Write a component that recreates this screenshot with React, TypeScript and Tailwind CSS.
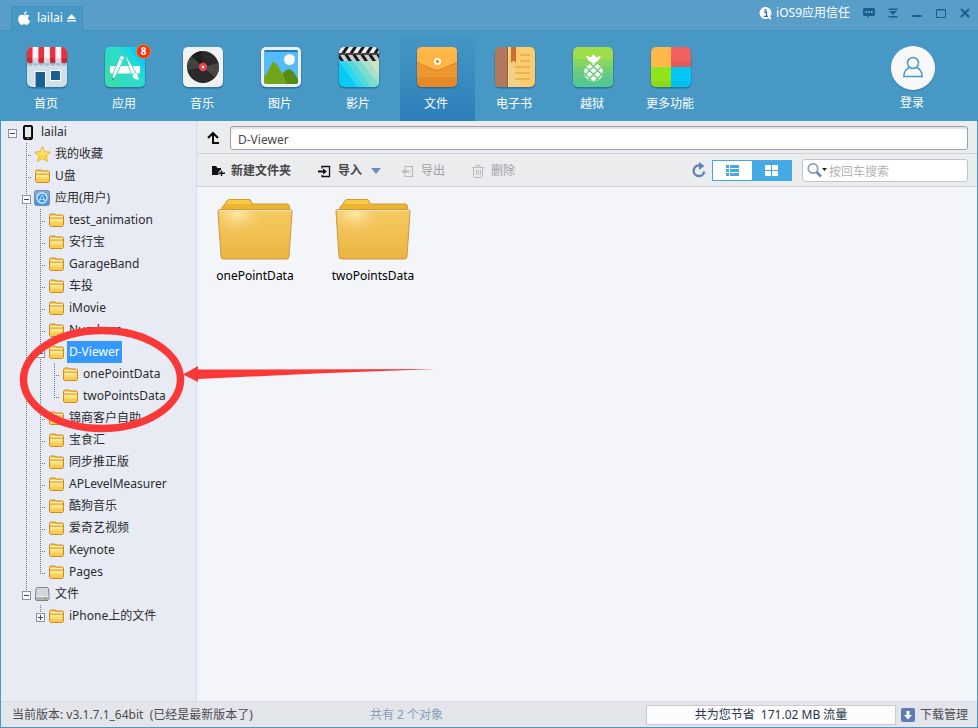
import type { ReactNode } from "react";

type IconProps = { className?: string };

/* ---------- navigation icons (40 x 42, including the lower shadow) ---------- */

function Tile({ id, children }: { id: string; children: ReactNode }) {
  return (
    <svg width="42" height="44" viewBox="-1 -1 42 44" className="block" aria-hidden="true">
      <defs>
        <clipPath id={id}>
          <rect width="40" height="40" rx="5" />
        </clipPath>
      </defs>
      <rect x="-0.5" y="0.5" width="41" height="41" rx="5.5" fill="#1d5c85" opacity="0.6" />
      <g clipPath={`url(#${id})`}>{children}</g>
    </svg>
  );
}

function HomeIcon() {
  return (
    <Tile id="tile-home">
      <rect width="40" height="40" fill="#cfe0ea" />
      <path d="M0 14h40v3a3 3 0 0 1-5.700 0a3 3 0 0 1-5.700 0a3 3 0 0 1-5.700 0a3 3 0 0 1-5.700 0a3 3 0 0 1-5.700 0a3 3 0 0 1-5.700 0a3 3 0 0 1-5.800 0z" fill="#a9bfd0" />
      {[0, 1, 2, 3, 4, 5, 6].map((i) => (
        <g key={i} fill={i % 2 ? "#f7f4f5" : "#e9303c"}>
          <rect x={i * 5.72} y="0" width="5.72" height="13" />
          <circle cx={i * 5.72 + 2.86} cy="13.500" r="2.860" fill={i % 2 ? "#d8d8da" : "#cf2433"} />
        </g>
      ))}
      <path d="M7.500 40V24H19v16z" fill="#fff" />
      <path d="M8.500 40V25H18v15z" fill="#195f91" />
      <rect x="23" y="23" width="11" height="11" fill="#fff" />
      <rect x="24" y="24" width="9" height="9" fill="#195f91" />
    </Tile>
  );
}

function AppsIcon() {
  return (
    <Tile id="tile-apps">
      <rect width="40" height="40" fill="#2fdcbe" />
      <path d="M0 0h18l22 34v6h-8z" fill="#2ddccb" />
      <path d="M14 0h14l12 17v18z" fill="#1fd8dc" />
      <path d="M24 0h16v24z" fill="#08cdf6" />
      <path d="M0 19v21h17L5 17z" fill="#36e0a9" />
      <rect x="5" y="19" width="30" height="7.500" rx="1" fill="#fff" />
      <path d="M15.500 8.500q2-.5 4 2L10.500 29.500 7 34l.5-6z" fill="#fff" stroke="#2bcfb8" strokeWidth=".8" />
      <path d="M14.500 12l4 2" stroke="#2bcfb8" strokeWidth=".8" />
      <path d="M7.500 30.500L7 34l2.500-2.500z" fill="#2b8d8d" />
      <path d="M19.500 6l11.500 19.500-4.500 2.500z" fill="#fff" stroke="#2bcfb8" strokeWidth=".8" />
      <path d="M27.500 28.500c1-1.500 2.500-2.500 4-2 2 1.500 1 3.500 2.500 6-3.500.2-6.500-1-6.500-4z" fill="#fff" />
    </Tile>
  );
}

function MusicIcon() {
  return (
    <Tile id="tile-music">
      <rect width="40" height="40" fill="#f1f1f2" />
      <circle cx="20" cy="20" r="16" fill="#292929" />
      <path d="M20 20L9 8.500A16 16 0 0 1 18 4.100z" fill="#1d1d1d" />
      <path d="M20 20L35.500 16A16 16 0 0 1 32 30.500z" fill="#484848" />
      <path d="M20 20L8 9.500A16 16 0 0 0 4.500 23z" fill="#424242" />
      <circle cx="20" cy="20" r="12" fill="none" stroke="#363636" strokeWidth=".5" />
      <circle cx="20" cy="20" r="4.200" fill="#f0424a" />
      <circle cx="20" cy="20" r="1.200" fill="#fff" />
    </Tile>
  );
}

function PictureIcon() {
  return (
    <Tile id="tile-picture">
      <rect width="40" height="40" fill="#eceff3" />
      <rect x="3" y="3" width="34" height="34" rx="2" fill="#55bbfa" />
      <path d="M3 5a2 2 0 0 1 2-2h30a2 2 0 0 1 2 2z" fill="#2679ae" />
      <circle cx="28.500" cy="12.500" r="5.500" fill="#f5f7f9" />
      <path d="M19 37c-1-6 4-15 9.500-15 4 1.500 6 6 8.500 10v3a2 2 0 0 1-2 2z" fill="#568c16" />
      <path d="M3 30c4-4 6-12 9.500-15.500 4 2 7 9.500 9.500 13 1 2.500 2.500 6 4 9.500H5a2 2 0 0 1-2-2z" fill="#72a519" />
    </Tile>
  );
}

function MovieIcon() {
  return (
    <Tile id="tile-movie">
      <rect width="40" height="40" fill="#07cbf7" />
      <path d="M0 14h40v26H18z" fill="#2ed6ef" />
      <path d="M7 14h33v26H25z" fill="#53d8e0" />
      <path d="M14 14h26v26h-8z" fill="#7cdcd2" />
      <path d="M21 14h19v23z" fill="#a8e0ca" />
      <path d="M30 14h10v15z" fill="#cce4bf" />
      <rect width="40" height="14" fill="#171717" />
      <g fill="#eeeeee">
        {[-1, 7, 15, 23, 31, 39].map((x) => (
          <path key={x} d={`M${x + 3} 0h4.500l-4 6h-4.500z`} />
        ))}
        {[-7, 1, 9, 17, 25, 33].map((x) => (
          <path key={x} d={`M${x} 8h4.500l4 6h-4.500z`} fill="#cfcbcf" />
        ))}
      </g>
      <path d="M0 7h40" stroke="#777" />
    </Tile>
  );
}

function FileIcon() {
  return (
    <Tile id="tile-file">
      <rect width="40" height="40" fill="#ee9630" />
      <rect y="30" width="40" height="10" fill="#e68a28" />
      <path d="M0 0h40v16L23 23.300q-3 1.200-6 0L0 16z" fill="#dc8420" />
      <path d="M0 0h40v15L23 22.300q-3 1.200-6 0L0 15z" fill="#fdb544" />
      <path d="M0 0h40v5H0z" fill="#ffba4b" />
      <circle cx="20.500" cy="14.500" r="2.700" fill="#e0902a" stroke="#fff" strokeWidth="1.800" />
    </Tile>
  );
}

function BookIcon() {
  return (
    <Tile id="tile-book">
      <rect width="40" height="40" fill="#fccb6c" />
      <rect width="13" height="40" fill="#b3785c" />
      <path d="M12.500 0v40" stroke="#8f5c47" />
      <path d="M13.500 0v40" stroke="#ffe29e" />
      <path d="M15 12l12 28H15z" fill="#f4d184" />
      <path d="M16 0h5v16l-2.500-2.500L16 16z" fill="#cd6d33" />
      <path d="M25 8h10M25 14h10M20 20h15M20 26h15M20 32h15" stroke="#e2ac4f" strokeWidth="1.600" />
    </Tile>
  );
}

function PineappleIcon() {
  return (
    <Tile id="tile-pineapple">
      <defs>
        <clipPath id="pineapple-body">
          <ellipse cx="20.500" cy="25.500" rx="9.500" ry="9" />
        </clipPath>
      </defs>
      <rect width="40" height="40" fill="#9fde49" />
      <rect y="12" width="40" height="7" fill="#86d65f" />
      <rect y="19" width="40" height="6" fill="#73cf74" />
      <rect y="25" width="40" height="6" fill="#64cb82" />
      <rect y="31" width="40" height="9" fill="#54c893" />
      <path d="M20.500 7l2.500 3.500 5-2-2 4.500-5.500 4-5.500-4-2-4.500 5 2z" fill="#fff" />
      <g clipPath="url(#pineapple-body)">
        <rect x="10" y="16" width="21" height="19" fill="#fff" />
        <path
          d="M20.500 11.500l16 16M12.500 11.500l20 20M20.500 27.500l8 8M4.500 11.500l24 24M4.500 19.500l16 16M20.500 11.500l-16 16M28.500 11.500l-24 24M36.500 11.500l-24 24M36.500 19.500l-16 16"
          stroke="#6bcb7c"
          strokeWidth="1.500"
        />
      </g>
    </Tile>
  );
}

function MoreIcon() {
  return (
    <Tile id="tile-more">
      <rect width="20" height="20" fill="#ffb94b" />
      <rect x="20" width="20" height="20" fill="#f2615f" />
      <rect y="20" width="20" height="20" fill="#93e31c" />
      <rect x="20" y="20" width="20" height="20" fill="#04c8f3" />
      <rect x="20" y="14" width="20" height="6" fill="#ea5858" />
      <rect y="34" width="20" height="6" fill="#8cd91a" />
      <rect x="20" y="34" width="20" height="6" fill="#03c0ea" />
    </Tile>
  );
}

/* ---------- small icons ---------- */

function AppleIcon() {
  return (
    <svg width="12" height="14" viewBox="0 0 12 14" fill="#fff" aria-hidden="true">
      <path d="M6 3.800C6 1.900 7.100.5 8.700.1 8.900 1.800 7.800 3.400 6 3.800z" />
      <path d="M6.100 4.500c.8 0 1.500-.8 2.900-.7 1 .1 1.900.5 2.400 1.300-2.100 1.300-1.800 4.100.6 5-.6 1.900-1.900 3.800-3.200 3.800-.9 0-1.300-.6-2.500-.6s-1.600.6-2.500.6C2 13.900.2 11 .2 8.300c0-2.700 1.500-4.500 3.300-4.500 1.200 0 1.800.7 2.600.7z" />
    </svg>
  );
}

function SmallFolder() {
  return (
    <svg width="15" height="14" viewBox="0 0 15 14" aria-hidden="true">
      <path d="M.5 12.500v-10l1-1.500h4.500l1 1h6.500l1 .8v9.700l-1 1h-12z" fill="#fccb4d" stroke="#ca8d24" />
      <path d="M1 3h13v1.500H1z" fill="#fff0bd" />
      <path d="M1 5h13" stroke="#dfa640" />
      <path d="M1.500 6h12v2h-12z" fill="#ffe692" />
      <path d="M1.500 8h12v2h-12z" fill="#fedb6c" />
    </svg>
  );
}

function StarIcon() {
  return (
    <svg width="17" height="16" viewBox="0 0 17 16" aria-hidden="true">
      <path d="M8.500 .7l2.200 5 5.600.5-4.200 3.700 1.300 5.400-4.900-2.900-4.900 2.900 1.300-5.400L.7 6.200l5.600-.5z" fill="#ffe01e" stroke="#e8ae52" />
      <path d="M8.500 2.500l1.600 4 4 .3-2.600 2.200h-6L2.700 6.800l4.200-.3z" fill="#fbdf7c" />
    </svg>
  );
}

function StoreIcon() {
  return (
    <svg width="17" height="16" viewBox="0 0 17 16" aria-hidden="true">
      <rect x=".5" y=".5" width="15" height="15" rx="2" fill="#4c97e0" stroke="#6f8fb8" />
      <path d="M1 3q0-2 2-2h10q2 0 2 2v3Q8 9 1 6z" fill="#86a9cf" />
      <circle cx="8" cy="8" r="5" fill="#3d93ea" stroke="#d9ecff" strokeWidth="1.300" />
      <path d="M5 9.500h6M7.500 5L5.500 11M8.500 5l2 6" stroke="#b9dcfb" strokeWidth=".9" />
    </svg>
  );
}

function DriveIcon() {
  return (
    <svg width="15" height="14" viewBox="0 0 15 14" aria-hidden="true">
      <path d="M2 .5h10.500l1 1 .5 7v4l-1 1H1.500l-1-1v-4l.5-7z" fill="#d5d5dc" stroke="#808086" />
      <path d="M1 9h12.500v3.500l-.7.500H1.700l-.7-.5z" fill="#b1b1b6" />
      <path d="M1 9.500h12.500" stroke="#eee" />
      <path d="M10.500 10.500v2" stroke="#66b12c" strokeWidth="1.500" />
    </svg>
  );
}

function PhoneIcon() {
  return (
    <svg width="11" height="15" viewBox="0 0 11 15" aria-hidden="true">
      <rect x=".5" y=".5" width="9" height="14" rx="1.500" fill="#161616" stroke="#080808" />
      <rect x="2" y="2" width="6" height="10" fill="#e9e9ec" />
      <circle cx="5" cy="13.300" r=".7" fill="#ddd" />
    </svg>
  );
}

function BigFolder({ id }: { id: string }) {
  return (
    <svg width="76" height="62" viewBox="0 0 76 62" className="block" aria-hidden="true">
      <defs>
        <linearGradient id={`${id}-body`} x1="0" y1="0" x2="0" y2="1">
          <stop offset="0" stopColor="#f6cb62" />
          <stop offset="1" stopColor="#ebb443" />
        </linearGradient>
        <radialGradient id={`${id}-shine`} cx=".35" cy=".1" r=".6">
          <stop offset="0" stopColor="#fee7a8" />
          <stop offset="1" stopColor="#f3c55b" stopOpacity="0" />
        </radialGradient>
      </defs>
      <path d="M5 12V8l3-3 2-3.500 2-1h20q2 0 2 2L36 5h35l1.500 2v4l1 3z" fill="#edb434" stroke="#d39b38" />
      <path d="M11 1h21l2 4H9z" fill="#fbcb46" />
      <path d="M1 12.500q0-2 2-2h70q2 0 2 2l-3 45q0 2.500-2.500 2.500h-63Q4 60 4 57.500z" fill={`url(#${id}-body)`} stroke="#cf9741" />
      <path d="M2.500 12h50Q45 34 37 42L20 46 4 47z" fill={`url(#${id}-shine)`} />
      <path d="M2 11.500h72" stroke="#fdebb8" />
    </svg>
  );
}

function ImportIcon({ className }: IconProps) {
  return (
    <svg width="13" height="13" viewBox="0 0 13 13" fill="none" stroke="currentColor" className={className} aria-hidden="true">
      <path d="M4 3.500V1.500h7.500v10H4V10" strokeWidth="1.300" />
      <path d="M0 6.500h5" strokeWidth="2" />
      <path d="M5 3.500v6L9 6.500z" fill="currentColor" stroke="none" />
    </svg>
  );
}

function ExportIcon() {
  return (
    <svg width="13" height="13" viewBox="0 0 13 13" fill="none" stroke="currentColor" className="text-[#b9babd]" aria-hidden="true">
      <path d="M4 3.500V1.500h7.500v10H4V10" strokeWidth="1.200" />
      <path d="M4 6.500h4.500" strokeWidth="2" />
      <path d="M4.500 3.500v6L.5 6.500z" fill="currentColor" stroke="none" />
    </svg>
  );
}

/* ---------- data ---------- */

const navItems: { label: string; icon: ReactNode; active?: boolean; badge?: string }[] = [
  { label: "首页", icon: <HomeIcon /> },
  { label: "应用", icon: <AppsIcon />, badge: "8" },
  { label: "音乐", icon: <MusicIcon /> },
  { label: "图片", icon: <PictureIcon /> },
  { label: "影片", icon: <MovieIcon /> },
  { label: "文件", icon: <FileIcon />, active: true },
  { label: "电子书", icon: <BookIcon /> },
  { label: "越狱", icon: <PineappleIcon /> },
  { label: "更多功能", icon: <MoreIcon /> },
];

/*
 * Guide cells, left to right: space = empty, | = line, T = branch, L = last branch,
 * o = open box at the root, - = open box on a line, _ = open box that ends a line, + = closed box
 */
type Row = { guides: string; label: string; icon?: ReactNode; selected?: boolean };

const rows: Row[] = [
  { guides: "o", label: "lailai", icon: <PhoneIcon /> },
  { guides: " T", label: "我的收藏", icon: <StarIcon /> },
  { guides: " T", label: "U盘" },
  { guides: " -", label: "应用(用户)", icon: <StoreIcon /> },
  { guides: " |T", label: "test_animation" },
  { guides: " |T", label: "安行宝" },
  { guides: " |T", label: "GarageBand" },
  { guides: " |T", label: "车投" },
  { guides: " |T", label: "iMovie" },
  { guides: " |T", label: "Numbers" },
  { guides: " |-", label: "D-Viewer", selected: true },
  { guides: " ||T", label: "onePointData" },
  { guides: " ||L", label: "twoPointsData" },
  { guides: " |T", label: "锦商客户自助" },
  { guides: " |T", label: "宝食汇" },
  { guides: " |T", label: "同步推正版" },
  { guides: " |T", label: "APLevelMeasurer" },
  { guides: " |T", label: "酷狗音乐" },
  { guides: " |T", label: "爱奇艺视频" },
  { guides: " |T", label: "Keynote" },
  { guides: " |L", label: "Pages" },
  { guides: " _", label: "文件", icon: <DriveIcon /> },
  { guides: "  +", label: "iPhone上的文件" },
];

/* ---------- parts ---------- */

function Guide({ kind }: { kind: string }) {
  const box = "o-_+".includes(kind);
  return (
    <svg width="14" height="22" viewBox="0 0 14 22" className="block shrink-0" aria-hidden="true" shapeRendering="crispEdges">
      <g stroke="#70737a" strokeDasharray="1 1" fill="none">
        {(kind === "|" || kind === "T" || kind === "-") && <path d="M7.500 0v22" />}
        {(kind === "L" || kind === "_" || kind === "+") && <path d="M7.500 0v13" />}
        {(kind === "T" || kind === "L") && <path d="M7 12.500h5" />}
      </g>
      {box && (
        <>
          <rect x="3.500" y="8.500" width="8" height="8" fill="#fbfbfb" stroke="#8f9299" />
          <path d="M5 12.500h5" stroke="#2f4a8a" />
          {kind === "+" && <path d="M7.500 10v5" stroke="#2f4a8a" />}
        </>
      )}
    </svg>
  );
}

function TreeRow({ row }: { row: Row }) {
  return (
    <li className="flex h-[22px] items-center">
      {row.guides.split("").map((g, i) => (
        <Guide key={i} kind={g} />
      ))}
      <span className="flex w-5 shrink-0 justify-center pr-px">{row.icon ?? <SmallFolder />}</span>
      <button
        className={
          row.selected
            ? "h-[22px] whitespace-nowrap bg-[#3399ff] px-0.5 text-white"
            : "h-[22px] whitespace-nowrap px-0.5"
        }
      >
        {row.label}
      </button>
    </li>
  );
}

function TitleBar() {
  return (
    <div className="flex h-[31px] shrink-0 items-end justify-between border-b border-[#4190bd] bg-[#599dc9] text-white">
      <button className="-mb-px ml-[11px] flex h-[25px] items-center rounded-t-[3px] border border-b-0 border-[#4190bd] bg-[#4798c5] px-1.5 pb-0.5">
        <AppleIcon />
        <span className="mx-[7px] mr-1">lailai</span>
        <svg width="9" height="8" viewBox="0 0 9 8" fill="#fff" aria-hidden="true">
          <path d="M4.500 0L9 5H0zM0 6h9v1.500H0z" />
        </svg>
      </button>
      <div className="flex h-[26px] items-center gap-3 self-start pr-[7px] text-[#1b5f8f]">
        <button className="flex items-center gap-1 pr-px text-white">
          <svg width="13" height="13" viewBox="0 0 13 13" aria-hidden="true">
            <circle cx="6.500" cy="6" r="6" fill="#fff" />
            <path d="M8 10h4v3z" fill="#fff" />
            <path d="M5 5h2.500v4M5 9.300h4" stroke="#2f74a5" strokeWidth="1.300" fill="none" />
            <rect x="5.700" y="2" width="1.800" height="1.700" fill="#2f74a5" />
          </svg>
          <span>iOS9应用信任</span>
        </button>
        <button aria-label="反馈">
          <svg width="12" height="10" viewBox="0 0 12 10" className="block" aria-hidden="true">
            <path d="M1 0h10l1 1v6l-1 1H6L4 10V8H1L0 7V1z" fill="currentColor" />
            <path d="M2.500 4h1.500M5.300 4h1.500M8 4h1.500" stroke="#9cc6e0" strokeWidth="1.400" />
          </svg>
        </button>
        <button aria-label="菜单">
          <svg width="12" height="10" viewBox="0 0 12 10" className="block" fill="currentColor" aria-hidden="true">
            <path d="M1.500 .5h9V2h-9zM2 3h8L6 7zM1.500 8h9v1.500h-9z" />
          </svg>
        </button>
        <button aria-label="最小化">
          <svg width="12" height="10" viewBox="0 0 12 10" className="block" fill="currentColor" aria-hidden="true">
            <path d="M1.500 7h9v2h-9z" />
          </svg>
        </button>
        <button aria-label="最大化">
          <svg width="12" height="10" viewBox="0 0 12 10" className="block" fill="none" stroke="currentColor" aria-hidden="true">
            <path d="M1.500 1.500h9v8h-9zM2 2h8" />
          </svg>
        </button>
        <button aria-label="关闭">
          <svg width="12" height="10" viewBox="0 0 12 10" className="block" fill="none" stroke="currentColor" strokeWidth="2" aria-hidden="true">
            <path d="M2 1l8 8M10 1L2 9" />
          </svg>
        </button>
      </div>
    </div>
  );
}

function NavBar() {
  return (
    <nav className="flex h-[90px] shrink-0 justify-between bg-[#4798c5] text-white">
      <div className="ml-2.5 flex gap-[3px] pt-1.5">
        {navItems.map((item) => (
          <button
            key={item.label}
            className={
              item.active
                ? "flex w-[75px] flex-col items-center bg-linear-to-b from-[#4596c5] to-[#2d7fba] pr-px pt-[9px]"
                : "flex w-[75px] flex-col items-center pr-px pt-[9px]"
            }
          >
            <span className="relative">
              {item.icon}
              {item.badge && (
                <span className="absolute -right-[5px] -top-0.5 size-[15px] rounded-full border border-[#f08a35] bg-[#f2320a] text-center text-[10px] font-bold leading-[13px]">
                  {item.badge}
                </span>
              )}
            </span>
            <span className="mt-[5px] pr-0.5">{item.label}</span>
          </button>
        ))}
      </div>
      <button className="mr-[33px] flex w-16 flex-col items-center pt-[15px]">
        <svg width="44" height="46" viewBox="0 0 44 46" className="block" aria-hidden="true">
          <circle cx="22" cy="23.500" r="22" fill="#2f7ca8" opacity=".7" />
          <circle cx="22" cy="22" r="22" fill="#f8f8f8" />
          <circle cx="22" cy="17" r="5.500" fill="none" stroke="#4798c5" strokeWidth="1.500" />
          <path d="M18.500 21.500c-4 1.500-5.500 4-5.700 9h18.400c-.2-5-1.700-7.500-5.700-9" fill="none" stroke="#4798c5" strokeWidth="1.500" />
        </svg>
        <span className="mt-0.5 pr-0.5">登录</span>
      </button>
    </nav>
  );
}

function Toolbar() {
  return (
    <div className="flex h-[33px] shrink-0 items-center justify-between border-b border-[#d0d1dc] bg-[#ebecee] pl-[15px] pr-[9px]">
      <div className="flex items-center pt-0.5 text-[#a0a1a5]">
        <button className="flex items-center gap-1.5 font-bold text-[#45464a]">
          <svg width="13" height="11" viewBox="0 0 13 11" aria-hidden="true">
            <path d="M0 0h4l1.500 2H9v7H0z" fill="#111" />
            <path d="M9.500 4v6.500M6.500 7.200h6.500" stroke="#ebecee" strokeWidth="3.500" />
            <path d="M9.500 4.500v5.500M7 7.200h6" stroke="#111" strokeWidth="1.500" />
          </svg>
          新建文件夹
        </button>
        <button className="ml-[27px] flex items-center gap-[7px] font-bold text-[#45464a]">
          <ImportIcon className="text-[#111]" />
          导入
          <svg width="10" height="6" viewBox="0 0 10 6" className="ml-0.5" aria-hidden="true">
            <path d="M0 0h10L5 6z" fill="#6e8dbb" />
          </svg>
        </button>
        <button className="ml-5 flex items-center gap-[7px]">
          <ExportIcon />
          导出
        </button>
        <button className="ml-[27px] flex items-center gap-[7px]">
          <svg width="12" height="13" viewBox="0 0 12 13" fill="none" stroke="currentColor" className="text-[#b9babd]" aria-hidden="true">
            <path d="M0 2.500h12M4 2V.5h4V2M1.500 3v8.500l1 1h7l1-1V3M4.500 5v5M6.500 5v5M8.500 5v5" />
          </svg>
          删除
        </button>
      </div>
      <div className="flex items-center">
        <button aria-label="刷新">
          <svg width="14" height="16" viewBox="0 0 14 16" className="block" aria-hidden="true">
            <path d="M7.500 3.500A5.300 5.300 0 1 0 12.200 9.500" fill="none" stroke="#6283b5" strokeWidth="2.400" />
            <path d="M7 0l5.500 4L7 8z" fill="#6283b5" />
          </svg>
        </button>
        <div className="ml-1.5 flex h-[21px] w-20 border border-[#45a9e3]">
          <button aria-label="列表" className="flex flex-1 items-center justify-center bg-white">
            <svg width="13" height="11" viewBox="0 0 13 11" fill="#45a9e3" aria-hidden="true" shapeRendering="crispEdges">
              <path d="M0 0h3v3H0zM4 0h9v3H4zM0 4h3v3H0zM4 4h9v3H4zM0 8h3v3H0zM4 8h9v3H4z" />
            </svg>
          </button>
          <button aria-label="图标" className="flex flex-1 items-center justify-center bg-[#45a9e3]">
            <svg width="13" height="11" viewBox="0 0 13 11" fill="#fff" aria-hidden="true" shapeRendering="crispEdges">
              <path d="M0 0h6v5H0zM7 0h6v5H7zM0 6h6v5H0zM7 6h6v5H7z" />
            </svg>
          </button>
        </div>
        <label className="ml-2.5 flex h-[23px] w-[166px] items-center rounded-[3px] border border-[#c5c6c9] bg-white pl-1">
          <svg width="20" height="16" viewBox="0 0 20 16" className="shrink-0" aria-hidden="true">
            <circle cx="6" cy="6.500" r="4.700" fill="none" stroke="#8ba0bd" strokeWidth="1.700" />
            <path d="M9.500 10l4.500 4.500" stroke="#6b89b8" strokeWidth="2.500" />
            <path d="M15 6h5l-2.500 3z" fill="#222" />
          </svg>
          <input
            type="text"
            aria-label="搜索"
            placeholder="按回车搜索"
            className="ml-0.5 min-w-0 flex-1 bg-transparent pt-[3px] outline-none placeholder:text-[#b2b2b5]"
          />
        </label>
      </div>
    </div>
  );
}

function Annotation() {
  return (
    <svg width="420" height="110" viewBox="0 0 420 110" className="pointer-events-none absolute left-[18px] top-[325px]" aria-hidden="true">
      <ellipse cx="84" cy="54.500" rx="78.500" ry="49" fill="none" stroke="#fb3838" strokeWidth="7.500" />
      <path d="M165 49.500L180 41v3.500l238-.5-120 4.500-118 5.500v3z" fill="#fb3838" />
    </svg>
  );
}

export default function App() {
  return (
    <div className="relative flex h-screen flex-col overflow-hidden bg-[#4798c5] font-['Noto_Sans','Noto_Sans_CJK_SC',sans-serif] text-[12px] leading-[18px] text-[#2b2b2e]">
      <TitleBar />
      <NavBar />
      <div className="mx-px flex min-h-0 flex-1">
        <aside className="w-[196px] shrink-0 overflow-hidden border-r border-[#cfe0f5] bg-[#e8ebf3] pl-1">
          <ul>
            {rows.map((row) => (
              <TreeRow key={row.label} row={row} />
            ))}
          </ul>
        </aside>
        <main className="flex min-w-0 flex-1 flex-col bg-[#f3f5f8]">
          <div className="flex h-[33px] shrink-0 items-center gap-2.5 border-b border-[#d0d1dc] bg-[#ebecee] pl-2.5 pr-[9px] pt-0.5">
            <button aria-label="上一级">
              <svg width="13" height="14" viewBox="0 0 13 14" className="block" fill="none" stroke="#0a0a0a" strokeWidth="2" aria-hidden="true">
                <path d="M1 7l5-5 5 5M6 2v10h6" />
              </svg>
            </button>
            <input
              type="text"
              aria-label="路径"
              defaultValue="D-Viewer"
              className="h-6 min-w-0 flex-1 rounded-[3px] border border-[#9da1a6] bg-white px-[7px] pt-0.5 text-[#48484b] shadow-[inset_0_2px_1px_#e3e3e5] outline-none"
            />
          </div>
          <Toolbar />
          <ul className="flex flex-1 pt-3">
            {["onePointData", "twoPointsData"].map((name) => (
              <li key={name} className="w-[118px]">
                <button className="flex w-full flex-col items-center gap-1.5 pr-0.5 text-black">
                  <BigFolder id={name} />
                  {name}
                </button>
              </li>
            ))}
          </ul>
        </main>
      </div>
      <footer className="mx-px mb-px flex h-[26px] shrink-0 items-center border-t border-[#d5deea] bg-[#e4e5eb] text-[#4a4b50]">
        <span className="w-[358px] shrink-0 whitespace-pre pl-[11px]">当前版本: v3.1.7.1_64bit  (已经是最新版本了)</span>
        <span className="ml-[11px] flex-1 text-[#869db6]">共有 2 个对象</span>
        <span className="h-5 w-[250px] whitespace-pre border border-[#cbccce] bg-[#fcfcfd] text-center text-[#27354d]">共为您节省  171.02 MB 流量</span>
        <button className="flex items-center gap-[5px] pl-[5px] pr-[9px]">
          <svg width="14" height="14" viewBox="0 0 14 14" aria-hidden="true">
            <rect width="14" height="14" rx="2" fill="#5d7db5" />
            <path d="M5.500 3h3v4H11l-4 4.500L3 7h2.500z" fill="#fff" />
          </svg>
          下载管理
        </button>
      </footer>
      <Annotation />
    </div>
  );
}
